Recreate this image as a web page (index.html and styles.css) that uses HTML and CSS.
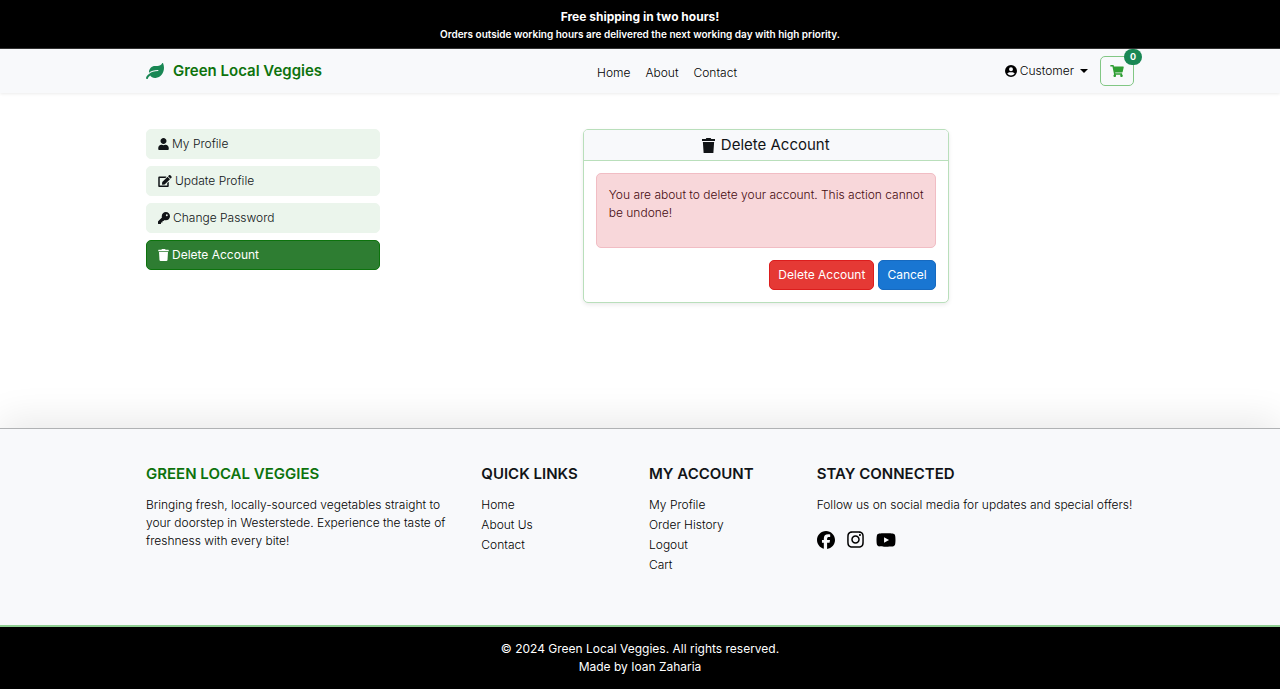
FILE: index.html
```html
<!DOCTYPE html>
<html lang="en">
<head>
<meta charset="utf-8">
<meta name="viewport" content="width=device-width, initial-scale=1">
<title>Green Local Veggies - Delete Account</title>
<link rel="stylesheet" href="styles.css">
</head>
<body>
<svg class="sprite" aria-hidden="true">
  <symbol id="trash" viewBox="0 0 448 512"><path d="M432 32H312l-9.400-18.700A24 24 0 0 0 281.100 0H166.800a23.700 23.700 0 0 0-21.400 13.300L136 32H16A16 16 0 0 0 0 48v32a16 16 0 0 0 16 16h416a16 16 0 0 0 16-16V48a16 16 0 0 0-16-16zM53.200 467a48 48 0 0 0 47.900 45h245.800a48 48 0 0 0 47.900-45L416 128H32z"/></symbol>
  <symbol id="trash-square" viewBox="0 0 448 512"><path d="M0 32h130l20-32h148l20 32h130v72H0zM30 136h388l-26 376H56z"/></symbol>
</svg>

<div class="banner">
  <p class="banner-title">Free shipping in two hours!</p>
  <p class="banner-note">Orders outside working hours are delivered the next working day with high priority.</p>
</div>

<header class="navbar">
  <div class="container nav-row">
    <a class="brand" href="#">
      <svg class="leaf" viewBox="0 0 576 512" aria-hidden="true"><path d="M546.200 9.700c-5.600-12.500-21.600-13-28.300-1.200C486.900 62.400 431.400 96 368 96h-80C182 96 96 182 96 288c0 7 .8 13.700 1.500 20.500C161.300 262.800 253.400 224 384 224c8.800 0 16 7.200 16 16s-7.200 16-16 16C132.600 256 26 410.100 2.400 468c-6.600 16.300 1.200 34.900 17.500 41.600 16.400 6.800 35-1.100 41.800-17.300 1.500-3.600 20.900-47.900 71.900-90.600 32.400 43.900 94 85.800 174.900 77.200C465.500 467.500 576 326.700 576 154.300c0-50.200-10.800-102.200-29.800-144.600z"/></svg>
      <span>Green Local Veggies</span>
    </a>
    <nav class="nav-links" aria-label="Main">
      <a href="#">Home</a>
      <a href="#">About</a>
      <a href="#">Contact</a>
    </nav>
    <div class="nav-actions">
      <button class="customer" type="button" aria-haspopup="true">
        <svg class="user-circle" viewBox="0 0 512 512" aria-hidden="true"><path fill-rule="evenodd" d="M256 0a256 256 0 1 1 0 512a256 256 0 1 1 0-512zM256 96a84 84 0 1 0 0 168a84 84 0 1 0 0-168zM206 304C162 304 120 328 99 367C136 416 193 448 256 448S376 416 413 367C392 328 350 304 306 304z"/></svg>
        <span>Customer</span>
        <span class="caret"></span>
      </button>
      <a class="cart" href="#" aria-label="Cart">
        <svg viewBox="0 0 576 512" aria-hidden="true"><path d="M528.100 301.300l47.300-208C578.800 78.300 567.400 64 552 64H159.200l-9.200-44.800C147.800 8 137.900 0 126.500 0H24C10.700 0 0 10.700 0 24v16c0 13.300 10.700 24 24 24h69.900l70.200 343.400C147.300 417.100 136 435.200 136 456c0 30.900 25.100 56 56 56s56-25.100 56-56c0-15.700-6.400-29.800-16.800-40h209.600C430.400 426.200 424 440.300 424 456c0 30.900 25.100 56 56 56s56-25.100 56-56c0-22.200-12.900-41.300-31.600-50.400l5.500-24.300c3.400-15-8-29.300-23.400-29.300H218.100l-6.500-32h293.100c11.200 0 20.900-7.800 23.400-18.700z"/></svg>
        <span class="badge">0</span>
      </a>
    </div>
  </div>
</header>

<main class="container content">
  <nav class="side-menu" aria-label="Account">
    <a href="#"><svg class="w-11" viewBox="0 0 448 512" aria-hidden="true"><path d="M224 256c70.700 0 128-57.300 128-128S294.700 0 224 0 96 57.300 96 128s57.300 128 128 128zm89.600 32h-16.700c-22.200 10.200-46.900 16-72.900 16s-50.600-5.800-72.900-16h-16.700C60.200 288 0 348.200 0 422.400V464c0 26.500 21.500 48 48 48h352c26.500 0 48-21.500 48-48v-41.600c0-74.200-60.200-134.400-134.400-134.400z"/></svg>My Profile</a>
    <a href="#"><svg class="w-14" viewBox="0 0 576 512" aria-hidden="true"><path d="M402.600 83.200l90.200 90.200c3.800 3.800 3.800 10 0 13.800L274.400 405.600l-92.800 10.300c-12.400 1.400-22.900-9.100-21.500-21.500l10.300-92.800L388.800 83.200c3.800-3.800 10-3.800 13.800 0zm162-22.900l-48.800-48.800c-15.200-15.200-39.900-15.200-55.200 0l-35.400 35.400c-3.800 3.800-3.800 10 0 13.800l90.200 90.200c3.800 3.800 10 3.800 13.800 0l35.400-35.400c15.200-15.300 15.200-40 0-55.200zM384 346.200V448H64V128h229.800c3.200 0 6.200-1.300 8.500-3.500l40-40c7.600-7.600 2.200-20.500-8.500-20.500H48C21.500 64 0 85.500 0 112v352c0 26.500 21.500 48 48 48h352c26.500 0 48-21.500 48-48V306.200c0-10.700-12.900-16-20.500-8.500l-40 40c-2.200 2.300-3.500 5.300-3.500 8.500z"/></svg>Update Profile</a>
    <a href="#"><svg class="w-12" viewBox="0 0 512 512" aria-hidden="true"><path d="M336 352c97.200 0 176-78.800 176-176S433.200 0 336 0S160 78.800 160 176c0 18.700 2.900 36.800 8.300 53.700L7 391c-4.500 4.500-7 10.600-7 17v80c0 13.300 10.700 24 24 24h80c13.300 0 24-10.700 24-24V448h40c13.300 0 24-10.700 24-24V384h40c6.400 0 12.500-2.500 17-7l33.300-33.300c16.900 5.400 35 8.300 53.700 8.300zM376 96a40 40 0 1 1 0 80 40 40 0 1 1 0-80z"/></svg>Change Password</a>
    <a class="active" href="#" aria-current="page"><svg class="w-11" aria-hidden="true"><use href="#trash"/></svg>Delete Account</a>
  </nav>
  <section class="panel">
    <div class="card">
      <h1 class="card-header"><svg aria-hidden="true"><use href="#trash-square"/></svg>Delete Account</h1>
      <div class="card-body">
        <div class="alert" role="alert"><p>You are about to delete your account. This action cannot be undone!</p></div>
        <form class="buttons">
          <button class="btn btn-danger" type="button">Delete Account</button>
          <a class="btn btn-primary" href="#">Cancel</a>
        </form>
      </div>
    </div>
  </section>
</main>

<footer class="footer">
  <div class="container footer-grid">
    <section>
      <h2 class="green">GREEN LOCAL VEGGIES</h2>
      <p>Bringing fresh, locally-sourced vegetables straight to your doorstep in Westerstede. Experience the taste of freshness with every bite!</p>
    </section>
    <section>
      <h2>QUICK LINKS</h2>
      <ul>
        <li><a href="#">Home</a></li>
        <li><a href="#">About Us</a></li>
        <li><a href="#">Contact</a></li>
      </ul>
    </section>
    <section>
      <h2>MY ACCOUNT</h2>
      <ul>
        <li><a href="#">My Profile</a></li>
        <li><a href="#">Order History</a></li>
        <li><a href="#">Logout</a></li>
        <li><a href="#">Cart</a></li>
      </ul>
    </section>
    <section>
      <h2>STAY CONNECTED</h2>
      <p>Follow us on social media for updates and special offers!</p>
      <div class="social">
        <a href="#" aria-label="Facebook"><svg width="18" height="18" viewBox="0 0 512 512"><path d="M512 256C512 114.600 397.400 0 256 0S0 114.600 0 256C0 376 82.700 476.800 194.200 504.500V334.200H141.400V256h52.800V222.300c0-87.100 39.400-127.500 125-127.500c16.200 0 44.200 3.200 55.700 6.400V172c-6-.6-16.500-1-29.600-1c-42 0-58.200 15.900-58.200 57.200V256h83.600l-14.400 78.200H287V510.100C413.800 494.800 512 386.900 512 256z"/></svg></a>
        <a href="#" aria-label="Instagram"><svg width="17" height="19" viewBox="0 0 448 512"><path d="M224.100 141c-63.600 0-114.900 51.300-114.900 114.900s51.300 114.900 114.900 114.900S339 319.500 339 255.900 287.700 141 224.100 141zm0 189.600c-41.100 0-74.700-33.500-74.700-74.700s33.500-74.700 74.700-74.700 74.700 33.500 74.700 74.700-33.600 74.700-74.700 74.700zm146.400-194.300c0 14.900-12 26.800-26.800 26.800-14.900 0-26.800-12-26.800-26.800s12-26.800 26.800-26.800 26.800 12 26.800 26.800zm76.100 27.200c-1.700-35.900-9.900-67.700-36.200-93.900-26.200-26.200-58-34.400-93.900-36.200-37-2.100-147.900-2.100-184.900 0-35.800 1.700-67.600 9.900-93.900 36.100s-34.400 58-36.200 93.900c-2.100 37-2.100 147.900 0 184.900 1.700 35.900 9.900 67.700 36.200 93.900s58 34.400 93.900 36.200c37 2.100 147.900 2.100 184.900 0 35.900-1.700 67.700-9.900 93.900-36.200 26.200-26.200 34.400-58 36.200-93.900 2.100-37 2.100-147.800 0-184.800zM398.800 388c-7.800 19.600-22.900 34.700-42.600 42.600-29.500 11.700-99.500 9-132.100 9s-102.700 2.600-132.100-9c-19.600-7.800-34.700-22.900-42.600-42.600-11.700-29.500-9-99.500-9-132.100s-2.600-102.700 9-132.100c7.800-19.600 22.900-34.700 42.600-42.600 29.500-11.700 99.500-9 132.100-9s102.700-2.600 132.100 9c19.600 7.800 34.700 22.900 42.600 42.600 11.700 29.500 9 99.500 9 132.100s2.700 102.700-9 132.100z"/></svg></a>
        <a href="#" aria-label="YouTube"><svg width="20" height="18" viewBox="0 0 576 512"><path d="M549.700 124.100c-6.300-23.700-24.800-42.300-48.300-48.600C458.800 64 288 64 288 64S117.200 64 74.600 75.500c-23.500 6.300-42 24.900-48.300 48.600-11.400 42.900-11.400 132.300-11.400 132.300s0 89.400 11.400 132.300c6.300 23.700 24.800 41.500 48.300 47.800C117.200 448 288 448 288 448s170.800 0 213.400-11.500c23.500-6.300 42-24.200 48.300-47.800 11.400-42.900 11.400-132.300 11.400-132.300s0-89.400-11.400-132.300zm-317.500 213.500V175.200l142.700 81.200-142.700 81.200z"/></svg></a>
      </div>
    </section>
  </div>
</footer>
<div class="copyright">
  <p>© 2024 Green Local Veggies. All rights reserved.</p>
  <p>Made by Ioan Zaharia</p>
</div>
</body>
</html>
```
FILE: styles.css
```css
* { box-sizing: border-box; }

body {
  margin: 0;
  min-height: 100vh;
  display: flex;
  flex-direction: column;
  background: #fff;
  color: #111417;
  font: 300 12px/18px Inter, "Liberation Sans", sans-serif;
}

a { color: inherit; text-decoration: none; }
p, h1, h2, ul { margin: 0; padding: 0; }
ul { list-style: none; }
svg { fill: currentColor; flex: none; }
.sprite { position: absolute; width: 0; height: 0; }

.container {
  width: 100%;
  max-width: 1006px;
  margin: 0 auto;
  padding: 0 9px;
}

.banner {
  padding: 8px 9px 6px;
  background: #000;
  border-bottom: 1px solid #333;
  color: #fff;
  text-align: center;
}
.banner-title { font-weight: 700; }
.banner-note { font-size: 10px; line-height: 16px; font-weight: 600; }

.navbar {
  background: #f8f9fb;
  box-shadow: 0 1px 3px rgba(0, 0, 0, 0.08);
  color: #000;
}
.nav-row {
  display: grid;
  grid-template-columns: 1fr auto 1fr;
  align-items: center;
  min-height: 44px;
}
.brand {
  display: flex;
  align-items: center;
  gap: 9px;
  color: #0d730d;
  font-size: 15px;
  font-weight: 600;
}
.leaf { width: 18px; height: 16px; fill: #198754; }
.nav-links { display: flex; gap: 15px; padding: 4px 0 0 54px; }
.nav-actions { display: flex; justify-content: flex-end; align-items: center; gap: 12px; }
.customer {
  display: flex;
  align-items: center;
  gap: 3px;
  padding: 0;
  border: 0;
  background: none;
  color: inherit;
  font: inherit;
}
.user-circle { width: 12px; height: 12px; }
.caret {
  margin-left: 3px;
  border: 4px solid transparent;
  border-top-color: currentColor;
  border-bottom: 0;
}
.cart {
  position: relative;
  display: flex;
  align-items: center;
  justify-content: center;
  width: 34px;
  height: 30px;
  border: 1px solid #81c784;
  border-radius: 5px;
  color: #2e9e33;
}
.cart svg { width: 14px; height: 12px; }
.badge {
  position: absolute;
  top: -8px;
  right: -9px;
  width: 18px;
  height: 16px;
  border-radius: 8px;
  background: #198754;
  color: #fff;
  font-size: 9px;
  line-height: 16px;
  font-weight: 700;
  text-align: center;
}

.content {
  flex: 1;
  display: grid;
  grid-template-columns: 1fr 3fr;
  align-items: start;
  padding: 36px 0;
}
.side-menu { display: flex; flex-direction: column; gap: 7px; padding: 0 9px; }
.side-menu a {
  display: flex;
  align-items: center;
  gap: 3px;
  padding: 5px 11px;
  border: 1px solid #ebf5ec;
  border-radius: 5px;
  background: #ebf5ec;
}
.side-menu svg { height: 12px; }
.w-11 { width: 11px; }
.w-12 { width: 12px; }
.w-14 { width: 14px; }
.side-menu .active {
  border-color: #0d730d;
  background: #2e7d32;
  color: #fff;
  font-weight: 400;
}

.panel { display: flex; justify-content: center; }
.card {
  width: 100%;
  max-width: 366px;
  border: 1px solid #b9dfbb;
  border-radius: 5px;
  background: #fff;
  box-shadow: 0 2px 4px rgba(0, 0, 0, 0.08);
}
.card-header {
  display: flex;
  align-items: center;
  justify-content: center;
  gap: 6px;
  padding: 6px 12px;
  border-bottom: 1px solid #b9dfbb;
  border-radius: 4px 4px 0 0;
  background: #f8f9fb;
  font-size: 15px;
  font-weight: 400;
}
.card-header svg { width: 13px; height: 15px; }
.card-body { padding: 12px; }
.alert {
  padding: 12px 8px 25px 12px;
  border: 1px solid #f1bdc4;
  border-radius: 5px;
  background: #f8d7da;
  color: #450a10;
}
.buttons { display: flex; justify-content: flex-end; gap: 4px; margin-top: 12px; }
.btn {
  padding: 5px 8px;
  border: 1px solid;
  border-radius: 5px;
  color: #fff;
  font: inherit;
  font-weight: 400;
}
.btn-danger { border-color: #dc1d1d; background: #e53935; }
.btn-primary { border-color: #1669bf; background: #1976d2; }

.footer {
  border-top: 1px solid #b0b2b4;
  border-bottom: 2px solid #8fcf92;
  background: #f8f9fb;
  box-shadow: 0 -8px 36px rgba(0, 0, 0, 0.09);
  color: #000;
}
.footer-grid {
  display: grid;
  grid-template-columns: 4fr 2fr 2fr 4fr;
  padding: 36px 0 49px;
}
.footer-grid section { min-width: 0; padding: 0 9px; }
.footer h2 {
  margin-bottom: 13px;
  color: #111417;
  font-size: 15px;
  font-weight: 600;
}
.footer .green { color: #0d730d; }
.footer li { margin-bottom: 2px; }
.social { display: flex; align-items: center; gap: 12px; margin-top: 16px; }
.social a { display: flex; }

.copyright {
  padding: 13px 9px;
  background: #000;
  color: #fff;
  font-weight: 400;
  text-align: center;
}
```
